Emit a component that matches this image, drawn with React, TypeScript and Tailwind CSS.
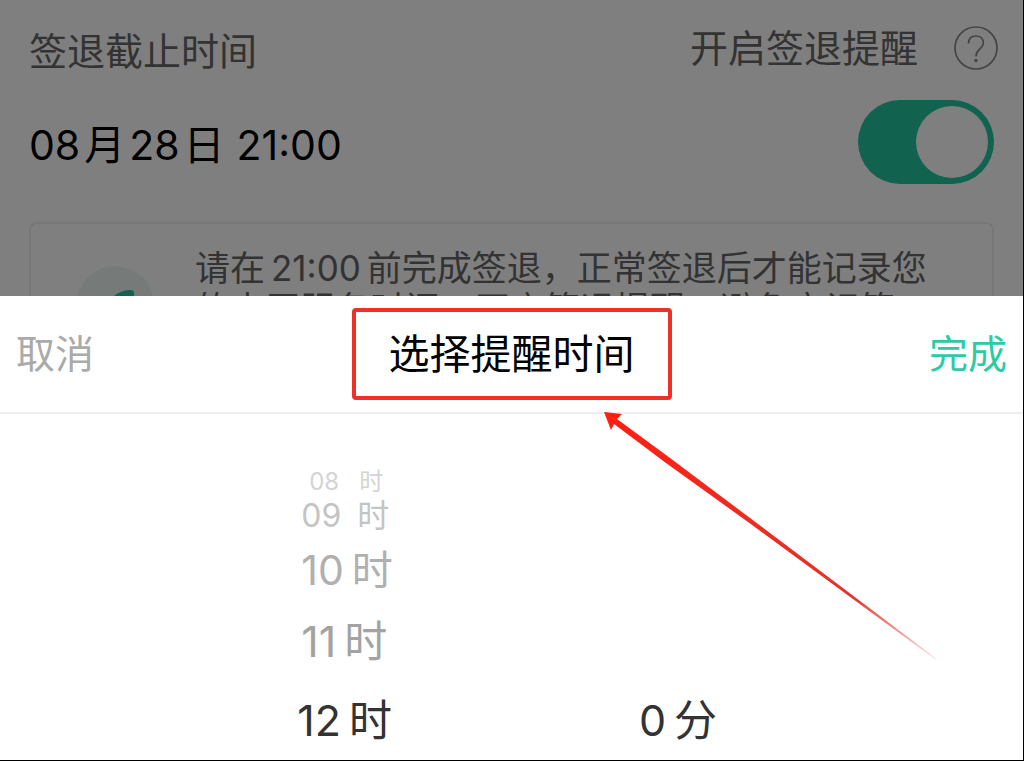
import React from 'react';
import clsx from 'clsx';

interface WheelItem {
    label: string;
    unit: string;
    className: string;
}

const hours: WheelItem[] = [
    { label: '08', unit: '时', className: 'h-6 gap-5 pl-3 text-[24px] text-[#d4d4d4]' },
    { label: '09', unit: '时', className: 'h-11 gap-4 pl-1 text-[32px] text-[#c4c4c4]' },
    { label: '10', unit: '时', className: 'h-16 gap-2 pl-1 text-[41px] text-[#b0b0b0]' },
    { label: '11', unit: '时', className: 'h-[78px] gap-2 pl-1 text-[43px] text-[#a3a3a3]' },
    { label: '12', unit: '时', className: 'h-20 gap-2 text-[43px] text-[#333333]' }
];

const minutes: WheelItem[] = [
    { label: '0', unit: '分', className: 'h-20 gap-2 text-[43px] text-[#333333]' }
];

const Wheel: React.FC<{ name: string; items: WheelItem[] }> = ({ name, items }) => (
    <div className="flex w-[333px] flex-col items-center justify-end">
        <ul role="listbox" aria-label={name}>
            {items.map((item, i) => (
                <li
                    key={item.label}
                    role="option"
                    aria-selected={i === items.length - 1}
                    className={clsx('flex items-center leading-none', item.className)}
                >
                    <span>{item.label}</span>
                    <span>{item.unit}</span>
                </li>
            ))}
        </ul>
    </div>
);

const HelpIcon: React.FC = () => (
    <svg viewBox="0 0 44 44" className="size-11" fill="none" stroke="#888888" strokeWidth="1.7">
        <circle cx="22" cy="22" r="21" />
        <path d="M14.500 17.500C14.500 12.500 17.500 10 22 10s7.300 2.800 7.300 6.800c0 3-1.500 4.600-4 6.700-2.400 2.100-3.300 3.700-3.300 7" />
        <circle cx="22" cy="34.500" r="1.700" fill="#888888" stroke="none" />
    </svg>
);

const NoticeIcon: React.FC = () => (
    <svg viewBox="0 0 80 80" className="size-20 shrink-0">
        <circle cx="40" cy="41" r="39" fill="#ecf6f3" />
        <path d="M38 33c5-5 12-7 18-7 2 0 3 1 3 3v28H38z" fill="#23c59e" />
    </svg>
);

// Red pointer towards the sheet title, fading out at the tail
const Pointer: React.FC = () => (
    <svg
        viewBox="0 0 334 248"
        aria-hidden="true"
        className="pointer-events-none absolute top-[116px] left-1/2 ml-[92px] h-[248px] w-[334px]"
    >
        <defs>
            <linearGradient id="tail" gradientUnits="userSpaceOnUse" x1="0" y1="0" x2="332" y2="247">
                <stop offset="0" stopColor="#ff1e12" />
                <stop offset="0.4" stopColor="#ee2a20" />
                <stop offset="0.75" stopColor="#e4332b" />
                <stop offset="1" stopColor="#e4332b" stopOpacity="0.1" />
            </linearGradient>
        </defs>
        <path d="M0 0l18 2-5 5 53 39 80 60 187 141-1 1-188-138-82-59-52-39-3 6z" fill="url(#tail)" />
    </svg>
);

// Check-out settings, dimmed while the sheet is open
const SettingsPage: React.FC = () => (
    <main className="relative min-h-0 flex-1 overflow-hidden px-[29px] pt-6">
        <div className="flex items-start justify-between">
            <h2 className="text-[38px] leading-[54px] text-[#666666]">签退截止时间</h2>
            <div className="-mr-1 flex items-center gap-9">
                <label htmlFor="remind" className="text-[38px] leading-[48px] text-[#666666]">
                    开启签退提醒
                </label>
                <button type="button" aria-label="帮助">
                    <HelpIcon />
                </button>
            </div>
        </div>

        <div className="mt-[22px] flex items-start justify-between">
            <time className="flex items-center text-[41px] leading-[90px] text-black">
                <span>08</span>
                <span className="mx-1">月</span>
                <span>28</span>
                <span className="mx-1">日</span>
                <span className="ml-2">21:00</span>
            </time>
            <input
                id="remind"
                type="checkbox"
                role="switch"
                defaultChecked
                className="h-[84px] w-[136px] appearance-none rounded-full bg-[#23c59e] p-[6px] before:ml-auto before:block before:size-[72px] before:rounded-full before:bg-white"
            />
        </div>

        <section className="mt-8 flex gap-10 rounded-lg border-2 border-[#eeeeee] pt-6 pr-12 pl-11">
            <div className="pt-4">
                <NoticeIcon />
            </div>
            <p className="flex flex-col text-[35px] leading-[41px] whitespace-nowrap text-[#666666]">
                <span>
                    请在<span className="mx-[6px]">21:00</span>前完成签退，正常签退后才能记录您
                </span>
                <span>的志愿服务时间，开启签退提醒，避免忘记签</span>
            </p>
        </section>

        <div className="absolute inset-0 bg-black/50" />
    </main>
);

const PickerSheet: React.FC = () => (
    <section role="dialog" aria-label="选择提醒时间" className="relative bg-white">
        <header className="flex items-center justify-between border-b-2 border-[#eeeeee] px-4 py-3 text-[39px]">
            <button type="button" className="text-[#aaaaaa]">取消</button>
            <h1 className="rounded-sm border-4 border-[#ee3124] px-[33px] text-[41px] leading-[84px] text-black">
                选择提醒时间
            </h1>
            <button type="button" className="text-[#2fcaa5]">完成</button>
        </header>

        <div className="flex justify-center pt-14">
            <Wheel name="小时" items={hours} />
            <Wheel name="分钟" items={minutes} />
        </div>

        <Pointer />
    </section>
);

export default function App() {
    return (
        <div className="flex h-screen flex-col overflow-hidden border-r border-b border-black bg-white font-['Inter','Noto_Sans_CJK_SC',sans-serif]">
            <SettingsPage />
            <PickerSheet />
        </div>
    );
}
